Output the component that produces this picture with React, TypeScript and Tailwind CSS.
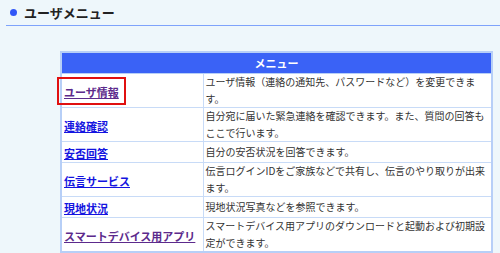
const font = { fontFamily: '"Noto Sans CJK JP", "Noto Sans", sans-serif' };

type Item = { label: string; desc: string; visited?: boolean; marked?: boolean };

const items: Item[] = [
  { label: 'ユーザ情報', desc: 'ユーザ情報（連絡の通知先、パスワードなど）を変更できます。', visited: true, marked: true },
  { label: '連絡確認', desc: '自分宛に届いた緊急連絡を確認できます。また、質問の回答もここで行います。' },
  { label: '安否回答', desc: '自分の安否状況を回答できます。' },
  { label: '伝言サービス', desc: '伝言ログインIDをご家族などで共有し、伝言のやり取りが出来ます。' },
  { label: '現地状況', desc: '現地状況写真などを参照できます。' },
  { label: 'スマートデバイス用アプリ', desc: 'スマートデバイス用アプリのダウンロードと起動および初期設定ができます。', visited: true },
];

export default function App() {
  return (
    <div className="w-[500px] h-[253px] overflow-hidden bg-[#eef7fb]" style={font}>
      <div className="flex items-center gap-[7px] pl-[10px] pt-[4px] h-[21px]">
        <span className="w-[7px] h-[7px] rounded-full bg-[#3157f7]" />
        <h1 className="text-[13px] font-bold text-[#222] leading-[16px]">ユーザメニュー</h1>
      </div>
      <div className="ml-[6px] mt-[4px] h-px bg-[#7ea3fb]" />

      <table className="ml-[60px] mt-[25px] w-[433px] border-collapse border-2 border-[#b7cff7] bg-white">
        <thead>
          <tr>
            <th
              colSpan={2}
              className="h-[20px] bg-[#3a62f6] text-white text-[11px] font-bold leading-[20px] p-0 border border-[#b7cff7]"
            >
              メニュー
            </th>
          </tr>
        </thead>
        <tbody>
          {items.map((item) => (
            <tr key={item.label}>
              <td className="w-[142px] px-[2px] py-0 align-middle border border-[#c8dbf7] leading-[18px]">
                <span className="relative inline-block">
                  <a
                    href="#"
                    className={
                      'text-[11px] font-bold underline ' +
                      (item.visited ? 'text-[#5c2a8c]' : 'text-[#1414e0]')
                    }
                  >
                    {item.label}
                  </a>
                  {item.marked && (
                    <span className="absolute -left-[7px] -right-[7px] -top-[4px] -bottom-[4px] border-2 border-[#e01010]" />
                  )}
                </span>
              </td>
              <td className="px-[2px] py-0 align-middle border border-[#c8dbf7] text-[10px] leading-[16.5px] text-[#333]">
                {item.desc}
              </td>
            </tr>
          ))}
        </tbody>
      </table>
    </div>
  );
}
